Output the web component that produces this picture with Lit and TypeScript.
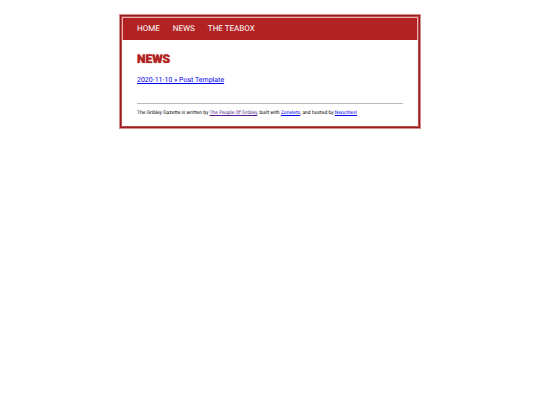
import { LitElement, html, css } from "lit";
import { customElement } from "lit/decorators.js";

@customElement("app-root")
export class AppRoot extends LitElement {
  static styles = css`
    :host {
      display: block;
      padding: 14px 16px;
      font-family: Roboto, sans-serif;
      font-size: 7px;
      color: #000;
      text-rendering: geometricPrecision;
    }
    .container {
      box-sizing: border-box;
      max-width: 302px;
      margin: 0 auto;
      border: 1px solid #d88c8c;
      background: #fff;
    }
    .frame {
      border: 1px solid #962020;
    }
    .inner {
      border: 1px solid #c04a4a;
    }
    .header {
      background: #b22222;
      border: 1px solid #e8b0b0;
      border-bottom: 0;
      padding: 0 14px;
      line-height: 22px;
    }
    .menu {
      display: flex;
      gap: 13px;
      margin: 0;
      padding: 0;
      list-style: none;
      font-size: 8px;
    }
    .menu a {
      color: #fff;
      text-decoration: none;
    }
    .content {
      padding: 12px 15px 0;
    }
    .title {
      margin: 0 0 9px;
      font-size: 12px;
      line-height: 14px;
      font-weight: 900;
      color: #b22222;
      text-shadow: 0 0 1px #b22222;
    }
    .posts {
      margin: 0;
      padding: 0;
      list-style: none;
      line-height: 10px;
    }
    a {
      color: #0000ee;
    }
    .footer {
      margin: 18px 15px 0;
      padding: 6px 0 10px;
      border-top: 1px solid #bbb;
      font-size: 5px;
      line-height: 6px;
    }
    .footer p {
      margin: 0;
    }
    .footer .visited {
      color: #551a8b;
    }
  `;

  render() {
    return html`
      <div class="container"><div class="frame"><div class="inner">
        <header class="header">
          <nav>
            <ul class="menu">
              <li><a href="#home">HOME</a></li>
              <li><a href="#news">NEWS</a></li>
              <li><a href="#teabox">THE TEABOX</a></li>
            </ul>
          </nav>
        </header>
        <main class="content">
          <h1 class="title">NEWS</h1>
          <ul class="posts">
            <li><a href="#post">2020-11-10 » Post Template</a></li>
          </ul>
        </main>
        <footer class="footer">
          <p>The Gribley Gazette is written by <a class="visited" href="#people">The People Of Gribley</a>, built with <a href="#zonelets">Zonelets</a>, and hosted by <a href="#neocities">Neocities!</a></p>
        </footer>
      </div></div></div>
    `;
  }
}
